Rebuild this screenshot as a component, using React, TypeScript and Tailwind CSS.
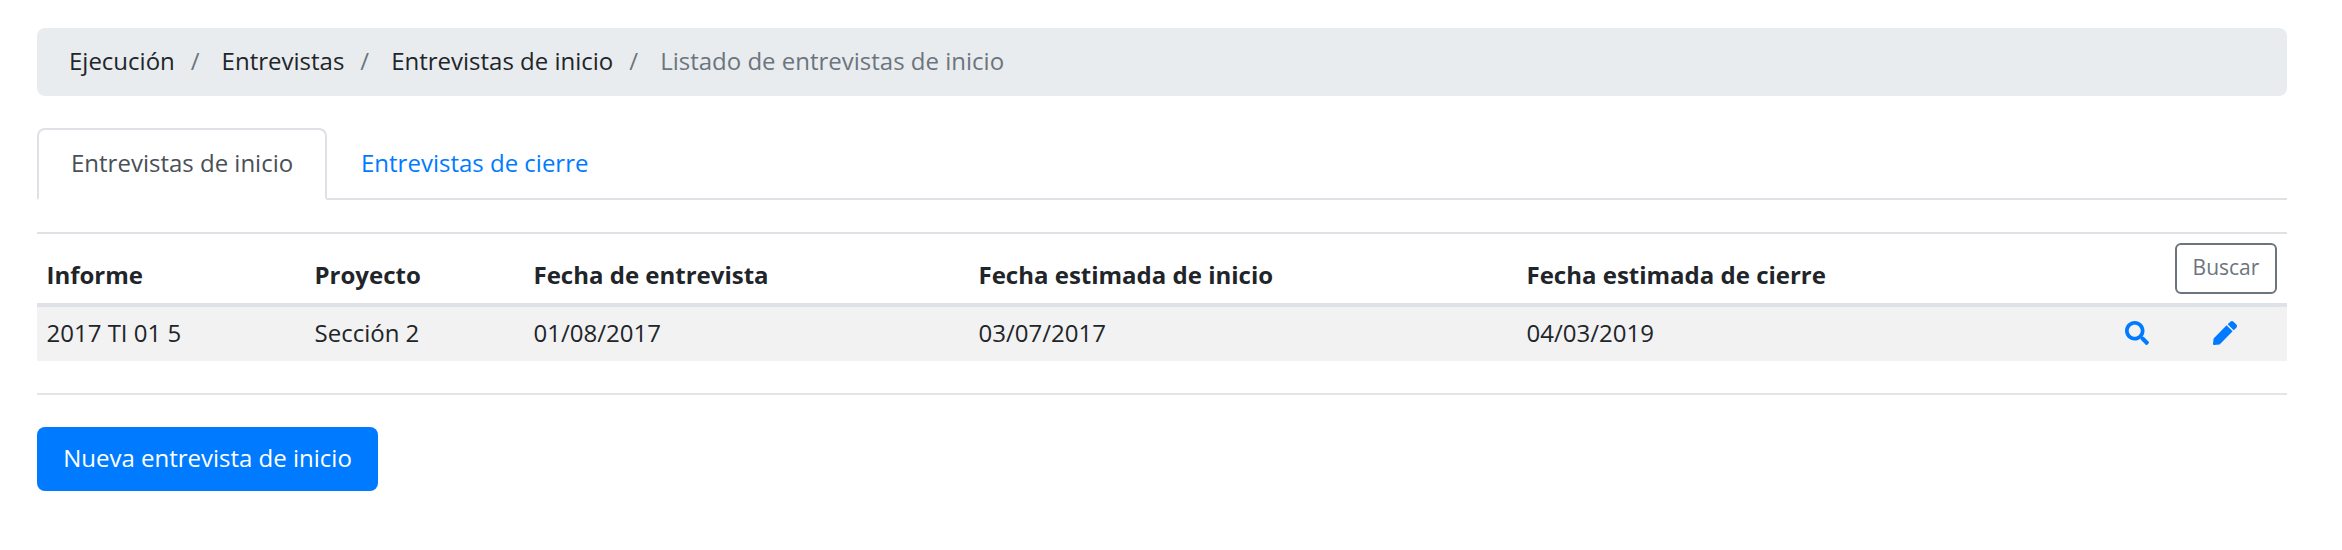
import { FaPen, FaSearch } from "react-icons/fa";

const crumbs = ["Ejecución", "Entrevistas", "Entrevistas de inicio"];

const headers = [
  "Informe",
  "Proyecto",
  "Fecha de entrevista",
  "Fecha estimada de inicio",
  "Fecha estimada de cierre",
];

const rows = [["2017 TI 01 5", "Sección 2", "01/08/2017", "03/07/2017", "04/03/2019"]];

export default function App() {
  return (
    <main className="min-h-[550px] bg-white pt-7 pr-[55px] pl-[37px] font-['Open_Sans',sans-serif] text-[24px] leading-9 text-[#212529]">
      <nav className="h-[68px] rounded-lg bg-[#e9ecef] px-8 pt-[15px]">
        <ol className="flex">
          {crumbs.map((crumb) => (
            <li key={crumb} className="flex">
              <a href="#">{crumb}</a>
              <span className="pr-[22px] pl-4 text-[#6c757d]">/</span>
            </li>
          ))}
          <li className="text-[#6c757d]">Listado de entrevistas de inicio</li>
        </ol>
      </nav>

      <div className="mt-8 flex h-[72px] border-b-2 border-[#dee2e6]">
        <a
          href="#"
          className="h-[72px] w-[290px] rounded-t-lg border-2 border-[#dee2e6] border-b-white bg-white pt-[15px] pl-8 whitespace-nowrap text-[#495057]"
        >
          Entrevistas de inicio
        </a>
        <a href="#" className="pt-[17px] pl-[34px] text-[#007bff]">
          Entrevistas de cierre
        </a>
      </div>

      <table className="mt-8 w-full table-fixed border-separate border-spacing-0 text-left">
        <colgroup>
          <col className="w-[268px]" />
          <col className="w-[219px]" />
          <col className="w-[445px]" />
          <col className="w-[548px]" />
          <col className="w-[593px]" />
          <col className="w-[53px]" />
          <col className="w-[124px]" />
        </colgroup>
        <thead>
          <tr className="h-[75px]">
            {headers.map((header) => (
              <th
                key={header}
                className="border-t-2 border-b-4 border-[#dee2e6] px-[9.5px] pb-2.5 align-bottom font-bold"
              >
                {header}
              </th>
            ))}
            <th
              colSpan={2}
              className="border-t-2 border-b-4 border-[#dee2e6] p-0 pt-[9px] pr-2.5 align-top font-normal"
            >
              <button className="ml-auto block h-[51px] w-[102px] rounded-md border-2 border-[#6c757d] pb-0.5 text-[21px] leading-[45px] text-[#6c757d]">
                Buscar
              </button>
            </th>
          </tr>
        </thead>
        <tbody>
          {rows.map((row) => (
            <tr key={row[0]} className="h-[54px] bg-[#f2f2f2]">
              {row.map((cell) => (
                <td key={cell} className="px-[9.5px] pt-0 pb-0.5">
                  {cell}
                </td>
              ))}
              <td className="p-0 pb-0.5">
                <FaSearch className="mx-auto text-[#007bff]" />
              </td>
              <td className="p-0 pb-0.5">
                <FaPen className="mx-auto text-[#007bff]" />
              </td>
            </tr>
          ))}
        </tbody>
      </table>

      <hr className="mt-8 border-t-2 border-black/10" />

      <button className="mt-8 h-16 w-[341px] rounded-lg bg-[#007bff] pb-0.5 whitespace-nowrap text-white">
        Nueva entrevista de inicio
      </button>
    </main>
  );
}
